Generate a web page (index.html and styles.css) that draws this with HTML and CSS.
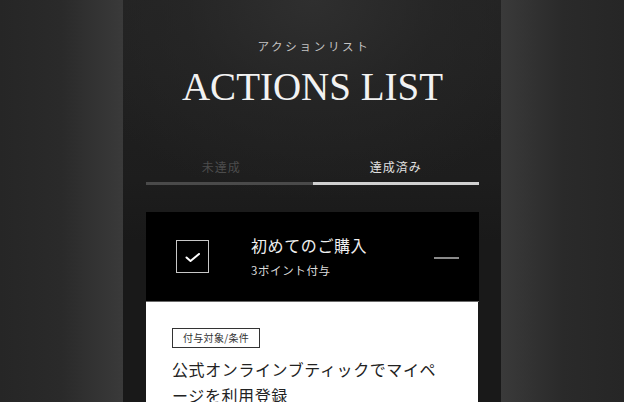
FILE: index.html
```html
<!DOCTYPE html>
<html lang="ja">
<head>
<meta charset="utf-8">
<title>ACTIONS LIST</title>
<link rel="stylesheet" href="styles.css">
</head>
<body>
<div class="page">
  <div class="side side-left"></div>
  <main class="column">
    <header class="head">
      <p class="head-sub">アクションリスト</p>
      <h1 class="head-title">ACTIONS LIST</h1>
    </header>
    <nav class="tabs">
      <div class="tab tab-off">未達成</div>
      <div class="tab tab-on">達成済み</div>
    </nav>
    <section class="card">
      <div class="card-head">
        <div class="check">
          <svg width="16" height="10" viewBox="0 0 16 10"><path d="M1.5 4.5 L5.5 8 L14 1" fill="none" stroke="#fff" stroke-width="2" stroke-linecap="round" stroke-linejoin="round"/></svg>
        </div>
        <div class="card-titles">
          <div class="card-title">初めてのご購入</div>
          <div class="card-points">3ポイント付与</div>
        </div>
        <div class="dash"></div>
      </div>
      <div class="card-body">
        <span class="tag">付与対象/条件</span>
        <p class="cond">公式オンラインブティックでマイページを利用登録</p>
      </div>
    </section>
  </main>
  <div class="side side-right"></div>
</div>
</body>
</html>
```

FILE: styles.css
```css
html, body {
  margin: 0;
  padding: 0;
  height: 100%;
  overflow: hidden;
  background: #1a1a1a;
}
.page {
  display: flex;
  height: 402px;
  overflow: hidden;
  font-family: "Noto Sans CJK JP", "Noto Sans", sans-serif;
}
.side {
  width: 123px;
  flex: none;
}
.side-left {
  background: linear-gradient(to right, #262626 0%, #2a2a2a 50%, #3a3a3a 100%);
}
.side-right {
  background: linear-gradient(to left, #262626 0%, #2a2a2a 50%, #3a3a3a 100%);
}
.column {
  width: 378px;
  flex: none;
  box-sizing: border-box;
  padding: 0 22px 0 23px;
  background:
    radial-gradient(ellipse 260px 200px at 50% 0%, #2f2f2f 0%, rgba(40,40,40,0.6) 50%, rgba(26,26,26,0) 100%),
    linear-gradient(to bottom, #222 0%, #1d1d1d 45%, #191919 60%, #191919 100%);
}
.head {
  text-align: center;
  padding-top: 39px;
}
.head-sub {
  margin: 0;
  font-size: 11.5px;
  line-height: 14px;
  letter-spacing: 2.7px;
  color: #c4c4c4;
  padding-left: 3px;
}
.head-title {
  margin: 14px 0 0;
  font-family: "Liberation Serif", "DejaVu Serif", serif;
  font-weight: normal;
  font-size: 39px;
  line-height: 40px;
  color: #f2f2f2;
}
.tabs {
  display: flex;
  margin-top: 52px;
}
.tab {
  width: 50%;
  box-sizing: border-box;
  text-align: center;
  font-size: 12px;
  line-height: 16px;
  letter-spacing: 1px;
  padding-bottom: 7px;
  border-bottom: 3px solid;
}
.tab-off {
  color: #4c4c4c;
  border-color: #4a4a4a;
  padding-right: 16px;
}
.tab-on {
  color: #e0e0e0;
  border-color: #d0d0d0;
}
.card {
  margin-top: 27px;
}
.card-head {
  display: flex;
  align-items: center;
  height: 89px;
  background: #000;
  border-bottom: 1px solid #6a6a6a;
  padding: 0 20px 0 30px;
}
.check {
  width: 31px;
  height: 31px;
  border: 1.5px solid #c8c8c8;
  display: flex;
  align-items: center;
  justify-content: center;
  flex: none;
}
.check svg {
  margin-top: 2px;
}
.card-titles {
  flex: 1;
  padding-left: 42px;
}
.card-title {
  font-size: 16px;
  line-height: 20px;
  letter-spacing: 0.6px;
  color: #f0f0f0;
}
.card-points {
  margin-top: 7px;
  font-size: 11.5px;
  line-height: 16px;
  letter-spacing: 0.6px;
  color: #dcdcdc;
}
.dash {
  width: 25px;
  height: 2px;
  background: #8a8a8a;
  margin-top: 2px;
}
.card-body {
  background: #fff;
  margin-right: 1px;
  padding: 26px 28px 20px 26px;
}
.tag {
  display: block;
  width: max-content;
  border: 1px solid #333;
  font-size: 10px;
  line-height: 18px;
  padding: 0 10px;
  color: #333;
  letter-spacing: 0.3px;
}
.cond {
  margin: 8px 0 0;
  font-size: 16px;
  line-height: 26px;
  letter-spacing: 0.6px;
  line-break: anywhere;
  color: #222;
}
```
